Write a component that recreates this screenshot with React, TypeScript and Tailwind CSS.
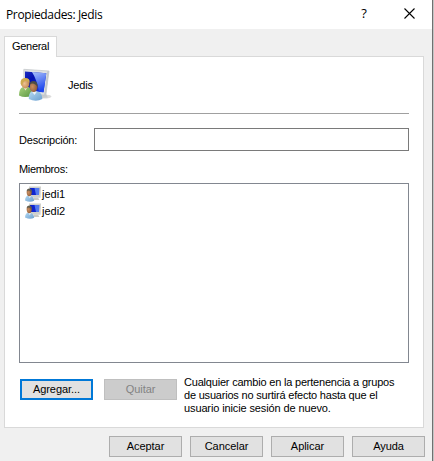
import type { ReactNode } from "react";

function GroupIcon() {
  return (
    <svg width="34" height="36" viewBox="0 0 34 36" className="shrink-0">
      <defs>
        <linearGradient id="screen" x1="0" y1="0" x2=".9" y2="1">
          <stop offset="0" stopColor="#1a2cc0" />
          <stop offset=".35" stopColor="#0410b0" />
          <stop offset="1" stopColor="#1238f0" />
        </linearGradient>
        <linearGradient id="glare" x1="0" y1="0" x2=".3" y2="1">
          <stop offset="0" stopColor="#a9c0fa" />
          <stop offset="1" stopColor="#1c46ee" />
        </linearGradient>
        <linearGradient id="blueShirt" x1="0" y1="0" x2="1" y2="1">
          <stop offset="0" stopColor="#b5d9f1" />
          <stop offset="1" stopColor="#6a9fd0" />
        </linearGradient>
        <linearGradient id="greenShirt" x1="0" y1="0" x2="1" y2="1">
          <stop offset="0" stopColor="#a9d37c" />
          <stop offset="1" stopColor="#5a9644" />
        </linearGradient>
        <radialGradient id="skin" cx=".35" cy=".5" r=".7">
          <stop offset="0" stopColor="#c98f62" />
          <stop offset="1" stopColor="#8a5632" />
        </radialGradient>
        <radialGradient id="paleSkin" cx=".4" cy=".5" r=".7">
          <stop offset="0" stopColor="#eec392" />
          <stop offset="1" stopColor="#b87c46" />
        </radialGradient>
      </defs>
      <ellipse cx="25" cy="29.5" rx="7.5" ry="2" fill="#dcdcdc" />
      <path d="M21 26L27 27L29 30.5L21 31Z" fill="#c8cbcd" />
      <path d="M4.8 2.3L30 4L26.8 28.3L5 26Z" fill="#dfe2e3" stroke="#c0c4c7" strokeWidth=".7" />
      <path d="M6 4.5L27.3 6.2L24.5 25.2L6 24Z" fill="url(#screen)" />
      <path d="M13 5.1L27.3 6.2L24.5 25.2L20 24.8Q18 13 13 5.1Z" fill="url(#glare)" />
      <path d="M28.3 4.2L30 4L26.8 28.3L25.2 28Z" fill="#c3c8cc" />
      <path d="M0 28.5Q0 21 4 20L10 20Q13 23 13 28.5Q6 31.5 0 28.5Z" fill="url(#greenShirt)" />
      <path d="M4 19.5L6.5 23.5L8.5 20Z" fill="#f1e5ce" />
      <ellipse cx="6.3" cy="16.5" rx="4" ry="5" fill="url(#paleSkin)" />
      <path d="M1.6 17Q1 11 6 11Q11.5 11 10.5 16Q9 13.8 6.5 14Q3.5 14.3 3 19Z" fill="#cfab50" />
      <path d="M9.8 32Q9.5 25.5 13 24.5H19Q23.3 26 23.3 32Q17 35.5 9.8 32Z" fill="url(#blueShirt)" />
      <path d="M12.5 24L15.5 28L18 24.5Z" fill="#edf3f8" />
      <ellipse cx="14.6" cy="19.7" rx="3.9" ry="5.3" fill="url(#skin)" />
      <path d="M10.4 18Q10.5 14 14.8 14Q19.2 14 18.4 20.5Q17 17 14 16.6Q11.8 16.5 10.4 18Z" fill="#4b4c46" />
    </svg>
  );
}

function UserIcon() {
  return (
    <svg width="16" height="16" viewBox="0 0 16 16" className="shrink-0">
      <path d="M9 11.5H13L14.5 14H8Z" fill="#c9c9c5" />
      <path d="M4 .5H16L15.5 11.8H4Z" fill="#cfd0cc" />
      <path d="M5 2H14.2L14 9H5Z" fill="#1025cf" />
      <path d="M9.5 2H14.2L14 9H11Z" fill="#5279ee" />
      <path d="M0 14.5Q.3 9.5 4 9.5Q8.7 10 9.2 14.8Q5 17 0 14.5Z" fill="url(#blueShirt)" />
      <path d="M3 9L4.8 12.3L6.2 9.3Z" fill="#edf4fa" />
      <ellipse cx="4.2" cy="6.6" rx="2.5" ry="3.6" fill="url(#skin)" />
      <path d="M1.6 5.5Q1.8 2.5 4.5 2.5Q7.4 2.8 6.7 7Q5.5 4.8 3.9 4.4Q2.5 4.3 1.6 5.5Z" fill="#5f5c4e" />
    </svg>
  );
}

function Button({ children, look = "border border-[#adadad] bg-[#e1e1e1]" }: { children: ReactNode; look?: string }) {
  return (
    <button className={`flex h-[21px] w-[73px] shrink-0 items-center justify-center whitespace-nowrap tracking-[-0.05px] ${look}`}>
      {children}
    </button>
  );
}

export default function App() {
  return (
    <div className="flex h-[461px] w-[434px] flex-col overflow-hidden border-r border-[#c4c4c4] bg-[#f0f0f0] font-['Liberation_Sans',Arial,sans-serif] text-[11px] leading-[13px] tracking-[-0.2px] text-black">
      <div className="flex grow flex-col border-r border-[#707070]">
        <header className="flex h-[29px] shrink-0 items-center bg-white pl-[6px] font-['Open_Sans','Noto_Sans',sans-serif] text-[12px]">
          <h1 className="grow pb-px tracking-[-0.35px]">Propiedades: Jedis</h1>
          <button className="mr-[36px] w-[8px] pb-[3px] text-[13px]">?</button>
          <svg width="11" height="11" viewBox="0 0 11 11" className="mr-[17px] mb-[3px]">
            <path d="M.5 .5L10.5 10.5M10.5 .5L.5 10.5" stroke="#000" strokeWidth="1.1" />
          </svg>
        </header>

        <main className="mt-[7px] ml-[4px] flex w-[420px] flex-col">
          <div className="z-10 -mb-px h-[21px] w-[53px] border border-b-0 border-[#d9d9d9] bg-white pt-[3px] pl-[7px] tracking-[-0.3px]">General</div>
          <section className="flex h-[372px] flex-col border border-[#d9d9d9] bg-white pr-[14px] pl-[14px]">
            <div className="mt-[10px] flex h-[36px] items-center">
              <GroupIcon />
              <span className="ml-[15px]">Jedis</span>
            </div>
            <hr className="mt-[10px] h-px border-0 bg-[#a0a0a0]" />
            <div className="mt-[14px] flex h-[23px] items-center">
              <label htmlFor="desc" className="w-[75px] pt-px">Descripción:</label>
              <input id="desc" className="h-[23px] w-[315px] border border-[#7a7a7a] bg-white px-1 outline-none" />
            </div>
            <div className="mt-[12px] tracking-[-0.3px]">Miembros:</div>
            <ul className="mt-[7px] h-[180px] border border-[#828790] pt-px pl-[5px]">
              {["jedi1", "jedi2"].map((name) => (
                <li key={name} className="flex h-[17px] items-center">
                  <UserIcon />
                  <span className="ml-px pt-px tracking-normal">{name}</span>
                </li>
              ))}
            </ul>
            <div className="mt-[13px] flex pl-px">
              <div className="mt-[3px] flex gap-[11px]">
                <Button look="border-2 border-[#0078d7] bg-[#e1e1e1]">Agregar...</Button>
                <Button look="border border-[#bfbfbf] bg-[#cccccc] text-[#838383]">Quitar</Button>
              </div>
              <p className="ml-[7px] whitespace-nowrap">
                Cualquier cambio en la pertenencia a grupos<br />
                de usuarios no surtirá efecto hasta que el<br />
                <span className="tracking-[-0.12px]">usuario inicie sesión de nuevo.</span>
              </p>
            </div>
          </section>
        </main>

        <footer className="mt-[8px] ml-[109px] flex gap-[8px]">
          <Button>Aceptar</Button>
          <Button>Cancelar</Button>
          <Button>Aplicar</Button>
          <Button>Ayuda</Button>
        </footer>
      </div>
    </div>
  );
}
